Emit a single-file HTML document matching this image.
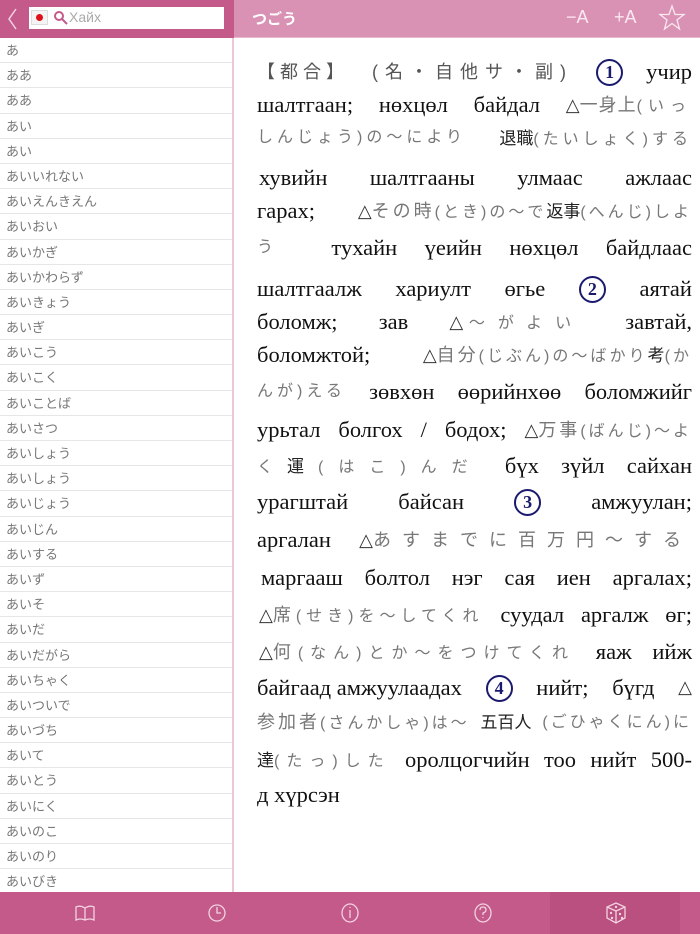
<!DOCTYPE html>
<html><head><meta charset="utf-8"><style>
*{margin:0;padding:0;box-sizing:border-box}
body{width:700px;height:934px;overflow:hidden;background:#fff;font-family:"Liberation Sans","Noto Sans CJK JP",sans-serif;position:relative}
.lh{position:absolute;left:0;top:0;width:234px;height:38px;background:#c45a8a}
.rh{position:absolute;left:234px;top:0;width:466px;height:38px;background:#d991b4;border-bottom:1px solid #e9b8cf}
.search{position:absolute;left:29px;top:7px;width:195px;height:22px;background:#fff}
.flag{position:absolute;left:2px;top:3px;width:17px;height:15px;background:#f4f4f4;border:1px solid #ddd}
.flag:after{content:"";position:absolute;left:4px;top:3px;width:7px;height:7px;border-radius:50%;background:#e0101a}
.ph{position:absolute;left:40px;top:2px;font-size:14px;color:#aaa}
.list{position:absolute;left:0;top:38px;width:234px;height:854px;border-right:2px solid #ecc7d8;overflow:hidden}
.list div{height:25.2px;line-height:25px;border-bottom:1px solid #e6e6e6;font-size:13px;color:#777;padding-left:6px}
.tb{position:absolute;left:0;top:892px;width:700px;height:42px;background:#c45a8a}
.sel{position:absolute;left:550px;top:0;width:130px;height:42px;background:#b9507f}
.ln{position:absolute;left:257px;width:435px;height:36px;line-height:36px;font-family:"Liberation Serif","Noto Serif CJK SC",serif;font-size:22.5px;color:#111;white-space:nowrap;display:flex;justify-content:space-between;align-items:center}
.ln>span{white-space:nowrap}
.ln.l{justify-content:flex-start}
.k{font-family:"Liberation Sans","Noto Sans CJK JP",sans-serif;font-size:16px;color:#777;letter-spacing:3px}
.kb{font-family:"Liberation Sans","Noto Sans CJK JP",sans-serif;font-size:17px;color:#222;letter-spacing:0}
.t{font-family:"DejaVu Sans",sans-serif;font-size:18px;color:#333;letter-spacing:0}
.c{display:inline-flex;align-items:center;justify-content:center;width:27px;height:27px;border:2px solid #1a1a6e;border-radius:50%;font-size:18px;color:#1a1a6e;font-weight:bold;font-family:"Liberation Serif",serif}
.big{font-size:18px}
</style></head><body>
<div class="lh">
<svg style="position:absolute;left:6px;top:8px" width="12" height="22"><path d="M10 1 L3 11 L10 21" stroke="#f3d2e1" stroke-width="1.5" fill="none"/></svg>
<div class="search"><div class="flag"></div>
<svg style="position:absolute;left:24px;top:3px" width="15" height="15"><circle cx="6" cy="6" r="4" stroke="#c45a8a" stroke-width="2" fill="none"/><path d="M9 9 L14 14" stroke="#c45a8a" stroke-width="2"/></svg>
<div class="ph">Хайх</div></div>
</div>
<div class="rh"><div style="position:absolute;left:18px;top:8px;color:#fff;font-size:15px;font-weight:bold">つごう</div>
<div style="position:absolute;left:332px;top:7px;color:#fbe9f1;font-size:18px">−A</div>
<div style="position:absolute;left:380px;top:7px;color:#fbe9f1;font-size:18px">+A</div>
<svg style="position:absolute;left:424px;top:4px" width="28" height="27"><path d="M14 2 L17 10.5 L26 10.5 L19 16 L21.5 25 L14 19.5 L6.5 25 L9 16 L2 10.5 L11 10.5 Z" stroke="#fbe9f1" stroke-width="1.3" fill="none"/></svg>
</div>
<div class="list">
<div>あ</div><div>ああ</div><div>ああ</div><div>あい</div><div>あい</div><div>あいいれない</div><div>あいえんきえん</div><div>あいおい</div><div>あいかぎ</div><div>あいかわらず</div><div>あいきょう</div><div>あいぎ</div><div>あいこう</div><div>あいこく</div><div>あいことば</div><div>あいさつ</div><div>あいしょう</div><div>あいしょう</div><div>あいじょう</div><div>あいじん</div><div>あいする</div><div>あいず</div><div>あいそ</div><div>あいだ</div><div>あいだがら</div><div>あいちゃく</div><div>あいついで</div><div>あいづち</div><div>あいて</div><div>あいとう</div><div>あいにく</div><div>あいのこ</div><div>あいのり</div><div>あいびき</div>
</div>
<div class="ln" style="top:54px"><span class="k big" style="color:#555;letter-spacing:5px">【都合】</span><span class="k big" style="color:#555;letter-spacing:7px">(名・自他サ・副)</span><span class="c">1</span><span>учир</span></div>
<div class="ln" style="top:87px"><span>шалтгаан;</span><span>нөхцөл</span><span>байдал</span><span><span class="t">△</span><span class="k big" style="letter-spacing:1px">一身上</span><span class="k" style="letter-spacing:6px">(いっ</span></span></div>
<div class="ln" style="top:120px"><span class="k" style="letter-spacing:4px">しんじょう)の〜により</span><span><span class="kb">退職</span><span class="k" style="letter-spacing:4px">(たいしょく)する</span></span></div>
<div class="ln" style="top:160px;padding-left:2px"><span>хувийн</span><span>шалтгааны</span><span>улмаас</span><span>ажлаас</span></div>
<div class="ln" style="top:193px"><span>гарах;</span><span><span class="t">△</span><span class="k"><span class="big">その時</span>(とき)の〜で</span><span class="kb">返事</span><span class="k">(へんじ)しよ</span></span></div>
<div class="ln" style="top:230px"><span class="k" style="margin-right:28px">う</span><span>тухайн</span><span>үеийн</span><span>нөхцөл</span><span>байдлаас</span></div>
<div class="ln" style="top:271px"><span>шалтгаалж</span><span>хариулт</span><span>өгье</span><span class="c">2</span><span>аятай</span></div>
<div class="ln" style="top:304px"><span>боломж;</span><span>зав</span><span><span class="t">△</span> <span class="k" style="letter-spacing:13px">〜がよい</span></span><span>завтай,</span></div>
<div class="ln" style="top:337px"><span>боломжтой;</span><span><span class="t">△</span><span class="k"><span class="big">自分</span>(じぶん)の〜ばかり</span><span class="kb">考</span><span class="k">(か</span></span></div>
<div class="ln" style="top:374px"><span class="k" style="letter-spacing:4px">んが)える</span><span>зөвхөн</span><span>өөрийнхөө</span><span>боломжийг</span></div>
<div class="ln" style="top:412px"><span>урьтал</span><span>болгох</span><span>/</span><span>бодох;</span><span><span class="t">△</span><span class="k"><span class="big">万事</span>(ばんじ)〜よ</span></span></div>
<div class="ln" style="top:448px"><span><span class="k" style="letter-spacing:14px">く</span><span class="kb" style="letter-spacing:14px">運</span><span class="k" style="letter-spacing:15px">(はこ)んだ</span></span><span>бүх</span><span>зүйл</span><span>сайхан</span></div>
<div class="ln" style="top:484px"><span>урагштай</span><span>байсан</span><span class="c">3</span><span>амжуулан;</span></div>
<div class="ln" style="top:522px"><span>аргалан</span><span><span class="t">△</span><span class="k big" style="letter-spacing:11px">あすまでに百万円〜する</span></span></div>
<div class="ln" style="top:560px;padding-left:4px"><span>маргааш</span><span>болтол</span><span>нэг</span><span>сая</span><span>иен</span><span>аргалах;</span></div>
<div class="ln" style="top:597px;padding-left:2px"><span><span class="t">△</span><span class="k" style="letter-spacing:5px"><span class="big">席</span>(せき)を〜してくれ</span></span><span>суудал</span><span>аргалж</span><span>өг;</span></div>
<div class="ln" style="top:634px;padding-left:2px"><span><span class="t">△</span><span class="k" style="letter-spacing:7px"><span class="big">何</span>(なん)とか〜をつけてくれ</span></span><span>яаж</span><span>ийж</span></div>
<div class="ln" style="top:670px"><span>байгаад амжуулаадах</span><span class="c">4</span><span>нийт;</span><span>бүгд</span><span class="t">△</span></div>
<div class="ln" style="top:705px"><span class="k"><span class="big">参加者</span>(さんかしゃ)は〜</span><span class="kb">五百人</span><span class="k">(ごひゃくにん)に</span></div>
<div class="ln" style="top:742px"><span><span class="kb">達</span><span class="k" style="letter-spacing:7px">(たっ)した</span></span><span>оролцогчийн</span><span>тоо</span><span>нийт</span><span>500-</span></div>
<div class="ln l" style="top:777px"><span>д хүрсэн</span></div>
<div class="tb"><div class="sel"></div>
<svg style="position:absolute;left:74px;top:12px" width="22" height="18"><path d="M11 4 Q6 1 2 3 L2 16 Q6 14 11 16 Q16 14 20 16 L20 3 Q16 1 11 4 Z M11 4 L11 16" stroke="#f3d2e1" stroke-width="1.3" fill="none"/></svg>
<svg style="position:absolute;left:207px;top:10px" width="20" height="22"><circle cx="10" cy="11" r="8" stroke="#f3d2e1" stroke-width="1.3" fill="none"/><path d="M10 5 L10 11 L14 11" stroke="#f3d2e1" stroke-width="1.3" fill="none"/></svg>
<svg style="position:absolute;left:340px;top:10px" width="20" height="22"><ellipse cx="10" cy="11" rx="8" ry="9" stroke="#f3d2e1" stroke-width="1.3" fill="none"/><path d="M10 8 L10 16 M10 5 L10 6" stroke="#f3d2e1" stroke-width="1.3"/></svg>
<svg style="position:absolute;left:473px;top:10px" width="20" height="22"><ellipse cx="10" cy="11" rx="8" ry="9" stroke="#f3d2e1" stroke-width="1.3" fill="none"/><path d="M7 8 Q7 5 10 5 Q13 5 13 8 Q13 10 10 11 L10 13 M10 15 L10 16" stroke="#f3d2e1" stroke-width="1.3" fill="none"/></svg>
<svg style="position:absolute;left:605px;top:9px" width="22" height="24"><path d="M11 2 L20 6 L20 17 L11 22 L2 17 L2 6 Z M2 6 L11 10 L20 6 M11 10 L11 22" stroke="#f3d2e1" stroke-width="1.3" fill="none"/><circle cx="11" cy="6" r="1.2" fill="#f3d2e1"/><circle cx="6" cy="12" r="1.2" fill="#f3d2e1"/><circle cx="7" cy="17" r="1.2" fill="#f3d2e1"/><circle cx="15" cy="13" r="1.2" fill="#f3d2e1"/><circle cx="17" cy="17" r="1.2" fill="#f3d2e1"/></svg>
</div>
</body></html>
